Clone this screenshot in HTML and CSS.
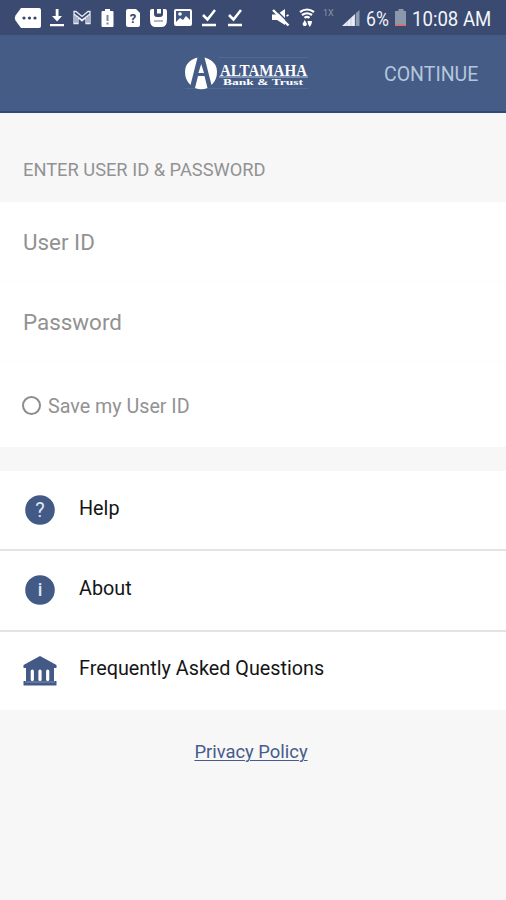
FILE: index.html
```html
<!DOCTYPE html>
<html lang="en">
<head>
<meta charset="utf-8">
<title>Altamaha Bank &amp; Trust</title>
<link rel="stylesheet" href="styles.css">
</head>
<body>
<div class="status">
  <svg width="28" height="22" viewBox="0 0 28 22"><path fill="#fff" d="M7 1h18q2 0 2 2v16q0 2-2 2H7L1.500 13.500Q0 11 1.500 8.500z"/><g fill="#34456b"><circle cx="10" cy="11" r="1.600"/><circle cx="15.500" cy="11" r="1.600"/><circle cx="21" cy="11" r="1.600"/></g></svg>
  <svg width="14" height="22" viewBox="0 0 14 22"><path fill="#fff" d="M5.700 2h2.800v7H12l-4.900 5.500L2 9h3.700zM0 17h14v2.300H0z"/></svg>
  <svg width="18" height="22" viewBox="0 0 18 22"><path fill="none" stroke="#e6ebf5" stroke-width="1.300" d="M1 4.500h2l6 5 6-5h2v12h-4v-6l-4 3.500-4-3.500v6H1zM1 7l8 6 8-6M3 8v8M15 8v8"/></svg>
  <svg width="13" height="22" viewBox="0 0 13 22"><path fill="#fff" d="M4 2h5v2h2.500q1 0 1 1v14q0 1-1 1h-10q-1 0-1-1V5q0-1 1-1H4z"/><path fill="#7885a1" d="M5.500 8h2v6h-2zM5.500 15.500h2v2h-2z"/></svg>
  <svg width="14" height="22" viewBox="0 0 14 22"><path fill="#fff" d="M2 2h8l4 4v12q0 2-2 2H2q-2 0-2-2V4q0-2 2-2z"/><text class="mark" x="7" y="16" font-size="13">?</text></svg>
  <svg width="17" height="22" viewBox="0 0 17 22"><path fill="#fff" d="M2 2h2v5q0 3 3 3h3q3 0 3-3V2h2q2 0 2 2v8q0 8-5 8H5q-5 0-5-8V4q0-2 2-2zM7 2h4v4.500H7z"/><path stroke="#a8b2c7" stroke-width="1.800" d="M4 14h9"/></svg>
  <svg width="18" height="22" viewBox="0 0 18 22"><rect y="2" width="18" height="17" rx="2" fill="#fff"/><path fill="#435682" d="M2 4h14v9l-4-4-3 4-3-2-4 4z"/><circle cx="6" cy="7" r="1.800" fill="#fff"/></svg>
  <svg width="16" height="22" viewBox="0 0 16 22"><path fill="none" stroke="#fff" stroke-width="2.500" d="M2 8l4.500 4.500L14 3M1 18h14"/></svg>
  <svg width="16" height="22" viewBox="0 0 16 22"><path fill="none" stroke="#fff" stroke-width="2.500" d="M2 8l4.500 4.500L14 3M1 18h14"/></svg>
  <svg width="18" height="22" viewBox="0 0 18 22"><path fill="#fff" d="M0 7.500h5l8-5.500v16l-8-5H0z"/><path stroke="#3b4c73" stroke-width="1.500" d="M2 1l16 16"/><path stroke="#fff" stroke-width="2.400" d="M1 3l15.500 15.500"/><path fill="none" stroke="#fff" stroke-width="1.500" d="M14.500 9l2-1"/></svg>
  <svg width="16" height="22" viewBox="0 0 16 22"><path fill="none" stroke="#fff" stroke-width="2.200" d="M1 5q7-5 14 0M3 8q5-3.500 10 0M5.500 10.800q2.500-2 5 0"/><path fill="#fff" d="M3.500 17l2.200-4 2.300 4-1 2H4.500zM8.500 14h4.500l-.5 3-1.700 3-1.800-3z"/></svg>
  <span class="net">1X</span>
  <svg width="18" height="22" viewBox="0 0 18 22"><path fill="#e8edf5" d="M0 19L13 7v12z"/><path fill="#8d9ab4" d="M14 6l3.500-3v16H14z"/><path stroke="#a3aec3" stroke-width=".5" d="M5 14v5M9 11v8M13 7v12"/></svg>
  <span class="charge">6%</span>
  <svg width="12" height="22" viewBox="0 0 12 22"><path fill="#8c98ab" d="M3.500 2h5v2H11v15H0V4h3.500z"/><path fill="#d9705c" d="M0 17.500h11V19H0z"/></svg>
  <span class="time">10:08 AM</span>
</div>
<header class="bar">
  <svg class="logo" width="126" height="36" viewBox="0 0 126 36">
    <path fill="none" stroke="#5872a0" stroke-width=".6" d="M0 33.500h123M34 2.500h89"/>
    <path fill="#fff" d="M12.500 2.500Q0 6 0 17q0 8 5.500 13zM19.500 2.500Q32 6 32 17q0 8-5.500 13zM16.200 9l2.800 9h-5.600zM13 21h6.500l3 12q-6.500 2.500-12.500 0z"/>
    <text x="35" y="20.500" font-size="16" textLength="87" lengthAdjust="spacingAndGlyphs">ALTAMAHA</text>
    <path stroke="#b9c5da" stroke-width="1" d="M34 22h89"/>
    <text x="38" y="30" font-size="9" textLength="80" lengthAdjust="spacingAndGlyphs">Bank &amp; Trust</text>
  </svg>
  <span class="continue">CONTINUE</span>
</header>
<main>
  <h1 class="title">ENTER USER ID &amp; PASSWORD</h1>
  <section class="form">
    <div class="field">User ID</div>
    <div class="field">Password</div>
    <div class="save"><i class="radio"></i><span>Save my User ID</span></div>
  </section>
  <nav class="links">
    <div class="row"><svg width="34" height="32" viewBox="0 0 34 32"><circle cx="17" cy="16" r="14.800" fill="#435a86"/><text class="glyph" x="17" y="23.300" font-size="20">?</text></svg><span>Help</span></div>
    <div class="row"><svg width="34" height="32" viewBox="0 0 34 32"><circle cx="17" cy="16" r="14.800" fill="#435a86"/><text class="glyph strong" x="17" y="22" font-size="18">i</text></svg><span>About</span></div>
    <div class="row"><svg width="34" height="32" viewBox="0 0 34 32"><path fill="#435a86" d="M17 1L33.500 10v3H31v13h2.500v4.500H.5V26H3V13H.5v-3z"/><path stroke="#fff" stroke-width="3.200" stroke-linecap="round" d="M9.300 16v8.500M17 16v8.500M24.700 16v8.500"/><path stroke="#9eadc6" stroke-width=".7" d="M2 27h30"/></svg><span>Frequently Asked Questions</span></div>
  </nav>
  <div class="privacy"><a>Privacy Policy</a></div>
</main>
</body>
</html>
```
FILE: styles.css
```css
* { box-sizing: border-box; }
body { margin: 0; height: 900px; background: #f7f7f7; font-family: Roboto, sans-serif; color: #151515; overflow: hidden; }
svg { display: block; }
.status { height: 35px; background: #3a4a70; padding: 0 0 0 14px; display: grid; grid-template-columns: 36px 23px 28px 25px 24px 24px 27px 26px 45px 27px 24px 19px 24px 29px 17px 85px; align-items: center; color: #f2f5fb; white-space: nowrap; font-size: 20px; line-height: 22px; }
.net { font-size: 9px; color: #8995ae; align-self: start; padding-top: 2px; }
.charge { padding-top: 2px; transform: scaleX(0.88); transform-origin: left; }
.time { padding-top: 2px; transform: scaleX(0.93); transform-origin: left; }
.mark { font-family: Roboto, sans-serif; font-weight: 700; fill: #34456b; text-anchor: middle; }
.glyph { font-family: Roboto, sans-serif; fill: #dfe6f2; text-anchor: middle; }
.strong { font-weight: 500; }
.bar { height: 78px; background: #455c87; border-bottom: 2px solid #304a77; display: grid; grid-template-columns: 185px 199px 1fr; align-items: center; }
.logo { grid-column: 2; overflow: visible; }
.logo text { fill: #fff; font-family: "Liberation Serif", serif; font-weight: 700; }
.continue { font-size: 19.5px; padding-top: 3px; color: #b5c6dc; white-space: nowrap; }
.title { margin: 0; height: 89px; padding: 46px 0 0 23px; font-size: 18.3px; line-height: 22px; font-weight: 400; color: #929292; white-space: nowrap; }
.form { height: 245px; background: #fff; }
.field { height: 80px; padding: 26px 0 0 23px; font-size: 22.4px; line-height: 28px; color: #929292; border-bottom: 1px solid #fcfcfc; }
.save { height: 85px; display: flex; align-items: center; gap: 7px; padding: 2px 0 0 22px; font-size: 19.7px; color: #929292; }
.save span { padding-top: 1px; }
.radio { width: 19px; height: 19px; border: 2px solid #8c8c8c; border-radius: 50%; }
.links { margin-top: 24px; background: #fff; }
.row { height: 80px; padding: 23px 0 0 23px; display: flex; gap: 22px; font-size: 19.8px; line-height: 28px; border-bottom: 2px solid #e3e3e3; white-space: nowrap; }
.row:first-child { line-height: 30px; }
.row + .row { height: 81px; line-height: 29px; }
.row:last-child { height: 78px; line-height: 27px; border-bottom: 0; }
.privacy { padding: 30px 4px 0 0; text-align: center; font-size: 18.4px; line-height: 24px; color: #465c8b; }
.privacy a { text-decoration: underline; text-underline-offset: 2px; text-decoration-thickness: 1px; }
```
